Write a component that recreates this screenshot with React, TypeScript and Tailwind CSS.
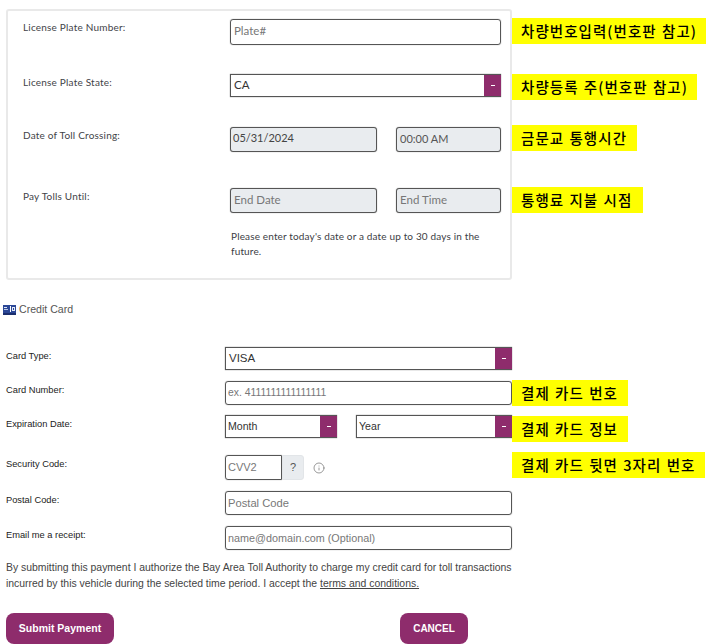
import React from "react";
import { Info } from "lucide-react";

const upper = "font-['Lato','Noto_Sans',sans-serif]";
const lower = "font-['Liberation_Sans',Arial,sans-serif]";
const field = "flex items-center border border-[#555] shadow-[0_0_1px_#777]";

const Arrow = () => (
    <span className="flex w-[17px] items-center justify-center self-stretch bg-[#8e2c6c]">
        <span className="block h-[1px] w-[4px] bg-white" />
    </span>
);

const Note = ({ top, width, text }: { top: string; width: string; text: string }) => (
    <div
        className={`absolute left-[512px] flex h-[26px] items-center bg-[#ffff00] pl-[9px] font-['Noto_Sans_CJK_KR',sans-serif] text-[14.5px] font-medium tracking-[1.05px] [word-spacing:1px] whitespace-nowrap text-black ${top} ${width}`}
    >
        {text}
    </div>
);

const UpperRow = ({ label, className, children }: { label: string; className: string; children: React.ReactNode }) => (
    <div className={`flex ${className}`}>
        <div className="w-[207px] shrink-0 pt-[2px] text-[10px] leading-[13px] tracking-[0.2px] text-[#3f4348]">{label}</div>
        {children}
    </div>
);

const LowerRow = ({ label, className, children }: { label: string; className: string; children: React.ReactNode }) => (
    <div className={`flex ${className}`}>
        <div className="w-[219px] shrink-0 pt-[4px] text-[9.3px] leading-[11px] text-[#222]">{label}</div>
        {children}
    </div>
);

export default function App() {
    return (
        <div className="relative h-[644px] w-[709px] overflow-hidden bg-white">
            {/* Vehicle */}
            <div className={`ml-[6px] mt-[9px] h-[271px] w-[506px] rounded-[3px] border-2 border-[#e9e9e9] pl-[15px] pt-[8px] ${upper}`}>
                <UpperRow label="License Plate Number:" className="h-[26px]">
                    <div className={`${field} h-[26px] w-[271px] rounded-[3px] pb-[2px] pl-[3px] text-[11.5px] text-[#777]`}>Plate#</div>
                </UpperRow>
                <UpperRow label="License Plate State:" className="mt-[29px] h-[23px]">
                    <div className={`${field} h-[23px] w-[271px] justify-between border-r-0 pl-[3px] text-[11.5px] text-[#333]`}>
                        <span className="pb-[2px]">CA</span>
                        <Arrow />
                    </div>
                </UpperRow>
                <UpperRow label="Date of Toll Crossing:" className="mt-[30px] h-[25px] items-start">
                    <div className={`${field} h-[25px] w-[147px] rounded-[3px] bg-[#e9ecef] pb-[2px] pl-[2px] text-[11px] text-[#444]`}>05/31/2024</div>
                    <div className={`${field} ml-[19px] h-[25px] w-[105px] rounded-[3px] bg-[#e9ecef] pb-[1px] pl-[3px] text-[11px] text-[#555]`}>00:00 AM</div>
                </UpperRow>
                <UpperRow label="Pay Tolls Until:" className="mt-[36px] h-[25px] items-start">
                    <div className={`${field} h-[25px] w-[147px] rounded-[3px] bg-[#e9ecef] pb-[2px] pl-[3px] text-[11.5px] text-[#777]`}>End Date</div>
                    <div className={`${field} ml-[19px] h-[25px] w-[105px] rounded-[3px] bg-[#e9ecef] pb-[2px] pl-[3px] text-[11.5px] text-[#777]`}>End Time</div>
                </UpperRow>
                <p className="ml-[208px] mt-[16px] w-[270px] text-[10px] leading-[15px] tracking-[0.15px] text-[#3c4045]">
                    Please enter today's date or a date up to 30 days in the future.
                </p>
            </div>

            {/* Payment */}
            <div className={lower}>
                <div className="ml-[3px] mt-[22px] flex h-[16px] items-center gap-[3px] text-[10.6px] text-[#555]">
                    <svg width="13" height="10" viewBox="0 0 13 10">
                        <rect width="13" height="10" fill="#2b4796" />
                        <rect x="0" y="8" width="13" height="2" fill="#1b2f6e" />
                        <rect x="1" y="2" width="3" height="1" fill="#dfe6f5" />
                        <rect x="1" y="4" width="4" height="1" fill="#b9c6e6" />
                        <rect x="7" y="1" width="1" height="6" fill="#fff" />
                        <rect x="9" y="2" width="3" height="4" fill="#e6ecf8" />
                        <rect x="10" y="3" width="1" height="2" fill="#2b4796" />
                    </svg>
                    Credit Card
                </div>
                <div className="ml-[6px]">
                    <LowerRow label="Card Type:" className="mt-[29px] h-[23px]">
                        <div className={`${field} h-[23px] w-[287px] justify-between border-r-0 pl-[3px] text-[11.5px] text-[#333]`}>
                            VISA
                            <Arrow />
                        </div>
                    </LowerRow>
                    <LowerRow label="Card Number:" className="mt-[11px] h-[24px]">
                        <div className={`${field} h-[24px] w-[287px] rounded-[3px] pl-[2px] text-[10.4px] text-[#777]`}>ex. 4111111111111111</div>
                    </LowerRow>
                    <LowerRow label="Expiration Date:" className="mt-[10px] h-[23px]">
                        <div className={`${field} h-[23px] w-[112px] justify-between border-r-0 pl-[2px] text-[10.6px] text-[#333]`}>
                            Month
                            <Arrow />
                        </div>
                        <div className={`${field} ml-[19px] h-[23px] w-[156px] justify-between border-r-0 pl-[2px] text-[10.6px] text-[#333]`}>
                            Year
                            <Arrow />
                        </div>
                    </LowerRow>
                    <LowerRow label="Security Code:" className="mt-[17px] h-[25px]">
                        <div className={`${field} h-[25px] w-[57px] rounded-l-[3px] pl-[2px] text-[11px] text-[#777]`}>CVV2</div>
                        <div className="flex h-[25px] w-[22px] items-center justify-center rounded-r-[3px] border border-[#e2e5e8] bg-[#e9ecef] text-[11px] text-[#555]">?</div>
                        <Info size={12} strokeWidth={1.5} className="ml-[9px] mt-[7px] text-[#777]" />
                    </LowerRow>
                    <LowerRow label="Postal Code:" className="mt-[11px] h-[24px]">
                        <div className={`${field} h-[24px] w-[287px] rounded-[3px] pl-[2px] text-[11.2px] text-[#777]`}>Postal Code</div>
                    </LowerRow>
                    <LowerRow label="Email me a receipt:" className="mt-[11px] h-[24px]">
                        <div className={`${field} h-[24px] w-[287px] rounded-[3px] pl-[2px] text-[10.8px] text-[#777]`}>name@domain.com (Optional)</div>
                    </LowerRow>
                    <p className="mt-[10px] w-[510px] text-[10.43px] leading-[16px] text-[#444]">
                        By submitting this payment I authorize the Bay Area Toll Authority to charge my credit card for toll transactions incurred by this vehicle during the selected time period. I accept the <a className="underline">terms and conditions.</a>
                    </p>
                    <div className="mt-[21px] flex">
                        <button className="h-[31px] w-[108px] rounded-[8px] bg-[#8e2c6c] text-[10.5px] font-bold text-white">Submit Payment</button>
                        <button className="ml-[286px] h-[31px] w-[68px] rounded-[8px] bg-[#8e2c6c] text-[10px] font-bold text-white">CANCEL</button>
                    </div>
                </div>
            </div>

            {/* Annotations */}
            <Note top="top-[18px]" width="w-[194px]" text="차량번호입력(번호판 참고)" />
            <Note top="top-[74px]" width="w-[185px]" text="차량등록 주(번호판 참고)" />
            <Note top="top-[125px]" width="w-[125px]" text="금문교 통행시간" />
            <Note top="top-[187px]" width="w-[131px]" text="통행료 지불 시점" />
            <Note top="top-[380px]" width="w-[116px]" text="결제 카드 번호" />
            <Note top="top-[416px]" width="w-[116px]" text="결제 카드 정보" />
            <Note top="top-[452px]" width="w-[193px]" text="결제 카드 뒷면 3자리 번호" />
        </div>
    );
}
